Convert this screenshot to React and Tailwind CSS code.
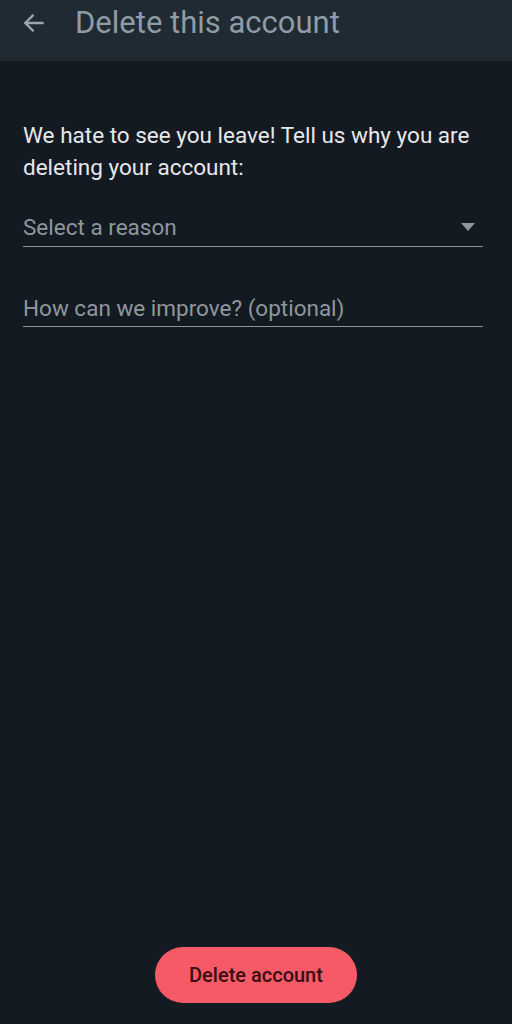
export default function App() {
  return (
    <div className="w-[512px] h-[1024px] bg-[#141a22] flex flex-col" style={{ fontFamily: "Roboto, 'Noto Sans', sans-serif" }}>
      <div className="h-[61px] bg-[#1f2a33] flex items-center shrink-0">
        <svg className="ml-[21px] mt-[-16px]" width="26" height="26" viewBox="0 0 24 24" fill="none" stroke="#9aa6af" strokeWidth="2.2" strokeLinecap="round" strokeLinejoin="round">
          <path d="M20 12H4" />
          <path d="M11 5l-7 7 7 7" />
        </svg>
        <div className="ml-[28px] mt-[-16px] text-[31px] text-[#8e9ca6] leading-none">Delete this account</div>
      </div>
      <div className="flex-1 flex flex-col pl-[23px] pr-[29px] pt-[58px]">
        <p className="text-[22.5px] leading-[32px] text-[#e6e8ea]">
          We hate to see you leave! Tell us why you are deleting your account:
        </p>
        <div className="mt-[24px] h-[40px] border-b-[1.5px] border-[#8a9197] flex items-center justify-between">
          <span className="text-[22.5px] text-[#8f979d] leading-none mt-[1px]">Select a reason</span>
          <svg className="mr-[8px] mt-[1px]" width="14" height="8" viewBox="0 0 14 8">
            <path d="M0 0h14L7 8z" fill="#8f979d" />
          </svg>
        </div>
        <div className="mt-[38px] h-[42px] border-b-[1.5px] border-[#8a9197] flex items-center">
          <span className="text-[22.5px] text-[#8f979d] leading-none mt-[6px]">How can we improve? (optional)</span>
        </div>
        <div className="flex-1" />
        <div className="flex justify-center pb-[21px] ml-[6px]">
          <button className="w-[202px] h-[56px] rounded-full bg-[#f65a67] text-[#3a0c13] text-[20px] font-medium">
            Delete account
          </button>
        </div>
      </div>
    </div>
  );
}
